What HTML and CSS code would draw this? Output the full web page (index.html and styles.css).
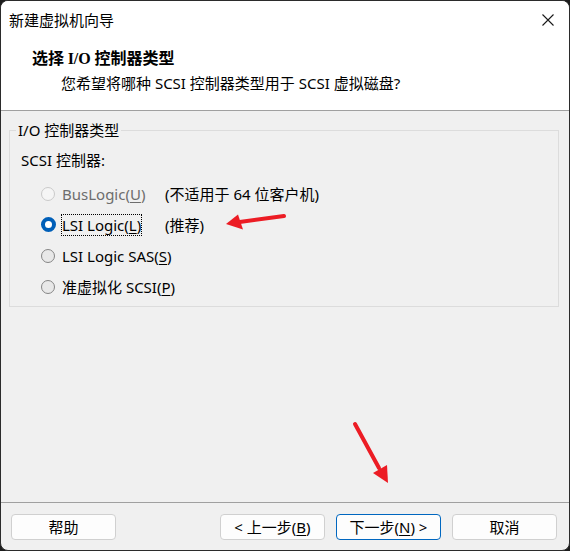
FILE: index.html
```html
<!DOCTYPE html>
<html lang="zh-CN">
<head>
    <meta charset="UTF-8">
    <title>新建虚拟机向导</title>
    <link rel="stylesheet" href="styles.css">
</head>
<body>
    <div class="window">
        <div class="top">
            <div class="titlebar">
                <span>新建虚拟机向导</span>
                <svg class="close" width="12" height="12" viewBox="0 0 12 12">
                    <path d="M0.5 0.5 L11.5 11.5 M11.5 0.5 L0.5 11.5" stroke="#1a1a1a" stroke-width="1.1" fill="none"/>
                </svg>
            </div>
            <div class="heading">选择 <span class="serif">I/O</span> 控制器类型</div>
            <div class="subtitle">您希望将哪种 SCSI 控制器类型用于 SCSI 虚拟磁盘?</div>
        </div>

        <div class="content">
            <fieldset class="group">
                <legend>I/O 控制器类型</legend>
                <div class="scsi-label">SCSI 控制器:</div>

                <div class="row first disabled">
                    <span class="radio"></span>
                    <span class="opt">BusLogic(<u>U</u>)</span>
                    <span class="note">(不适用于 64 位客户机)</span>
                </div>
                <div class="row">
                    <span class="radio checked"></span>
                    <span class="opt"><span class="focus">LSI Logic(<u>L</u>)</span></span>
                    <span class="note">(推荐)</span>
                </div>
                <div class="row">
                    <span class="radio"></span>
                    <span class="opt">LSI Logic SAS(<u>S</u>)</span>
                </div>
                <div class="row">
                    <span class="radio"></span>
                    <span class="opt">准虚拟化 SCSI(<u>P</u>)</span>
                </div>
            </fieldset>
        </div>

        <div class="footer">
            <button class="btn">帮助</button>
            <button class="btn push">&lt; 上一步(<u>B</u>)</button>
            <button class="btn default">下一步(<u>N</u>) &gt;</button>
            <button class="btn">取消</button>
        </div>

        <!-- red annotation arrows drawn over the dialog -->
        <svg class="marks" width="570" height="551" viewBox="0 0 570 551">
            <line x1="284" y1="216" x2="236" y2="222.5" stroke="#ec1c24" stroke-width="4" stroke-linecap="round"/>
            <polygon points="226,224 238,214.5 243,229.5" fill="#ec1c24"/>
            <line x1="355" y1="424" x2="379" y2="468" stroke="#ec1c24" stroke-width="4" stroke-linecap="round"/>
            <polygon points="388,483 373,473 387,465" fill="#ec1c24"/>
        </svg>
    </div>
</body>
</html>
```

FILE: styles.css
```css
html, body {
    margin: 0;
    padding: 0;
    background-color: #1c1c1c;
}

.window {
    position: relative;
    width: 570px;
    height: 551px;
    box-sizing: border-box;
    border: 1px solid #2b2b2b;
    border-radius: 8px;
    overflow: hidden;
    display: flex;
    flex-direction: column;
    background-color: #f0f0f0;
    font-family: "Noto Sans", "Noto Sans CJK SC", sans-serif;
    font-size: 15px;
    color: #000;
}

u {
    text-underline-offset: 2px;
}

.top {
    height: 109px;
    flex-shrink: 0;
    background-color: #fff;
    border-bottom: 1px solid #a0a0a0;
}

.titlebar {
    height: 37px;
    display: flex;
    align-items: center;
    justify-content: space-between;
    padding: 0 15px 0 8px;
    line-height: 20px;
}

.heading {
    margin: 9px 0 0 31px;
    font-size: 16px;
    font-weight: bold;
    line-height: 20px;
    font-family: "Noto Sans CJK SC", sans-serif;
}

.serif {
    font-family: "Liberation Serif", serif;
}

.subtitle {
    margin: 4px 0 0 60px;
    line-height: 20px;
}

.content {
    flex: 1;
    padding: 9px 10px 0 8px;
}

.group {
    margin: 0;
    padding: 0 11px 4px 11px;
    border: 1px solid #dcdcdc;
}

.group legend {
    margin-left: -5px;
    padding: 0 2px;
    line-height: 20px;
}

.scsi-label {
    margin-top: 10px;
    line-height: 20px;
}

.row {
    height: 31px;
    display: flex;
    align-items: center;
    line-height: 20px;
    white-space: nowrap;
}

.row.first {
    margin-top: 8px;
}

.radio {
    flex-shrink: 0;
    width: 14px;
    height: 14px;
    box-sizing: border-box;
    margin: 0 7px 0 20px;
    border: 1px solid #858585;
    border-radius: 50%;
    background-color: #e8e8e8;
}

.radio.checked {
    width: 15px;
    height: 15px;
    margin-right: 6px;
    border: 4px solid #005fb8;
    background-color: #fff;
}

.disabled .radio {
    border-color: #cacaca;
    background-color: #f5f5f5;
}

.disabled .opt {
    color: #6d6d6d;
}

.opt {
    flex-shrink: 0;
    min-width: 103px;
}

.focus {
    display: inline-block;
    outline: 1px dotted #000;
}

.footer {
    flex-shrink: 0;
    height: 48px;
    box-sizing: border-box;
    border-top: 1px solid #a0a0a0;
    display: flex;
    align-items: flex-start;
    gap: 11px;
    padding: 11px 12px 0 10px;
}

.btn {
    width: 105px;
    height: 26px;
    padding: 0;
    border: 1px solid #d0d0d0;
    border-radius: 4px;
    background-color: #fdfdfd;
    font-family: "Noto Sans", "Noto Sans CJK SC", sans-serif;
    font-size: 15px;
    line-height: 20px;
    color: #000;
}

.btn.push {
    margin-left: auto;
}

.btn.default {
    border-color: #0067c0;
}

.marks {
    position: absolute;
    top: -1px;
    left: -1px;
    pointer-events: none;
}
```
